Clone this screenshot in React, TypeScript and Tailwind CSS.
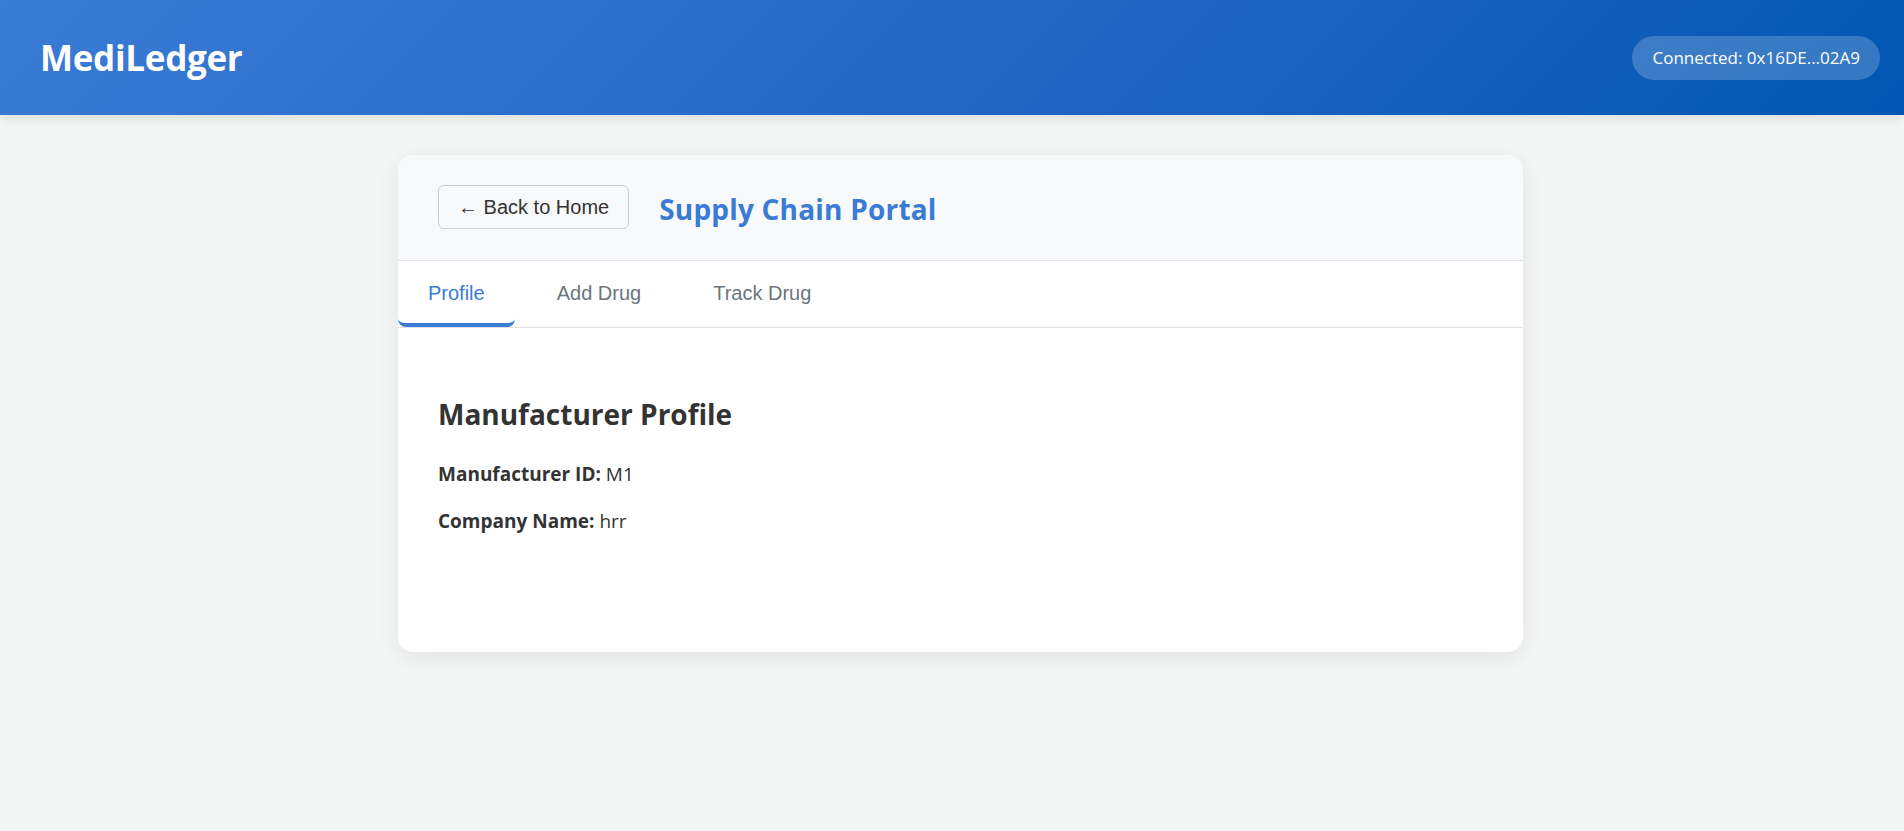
import React from "react";

export default function App() {
  return (
    <div className="min-h-screen bg-[#f4f5f5] font-['Open_Sans',sans-serif] text-[#333]">
      <header className="h-[115px] flex items-center justify-between pl-[40px] pr-[24px] bg-linear-135 from-[#3a7bd5] to-[#0056b3] shadow-[0_2px_12px_rgba(0,0,0,0.12)]">
        <h1 className="text-[35px] font-bold text-white leading-[48px] tracking-[-0.3px]">MediLedger</h1>
        <div className="h-[44px] px-[20px] flex items-center rounded-full bg-white/20 text-white text-[17px]">
          Connected: 0x16DE...02A9
        </div>
      </header>
      <main className="pt-[40px] pb-[40px]">
        <div className="ml-[398px] w-[1125px] bg-white rounded-[15px] overflow-hidden shadow-[0_5px_25px_rgba(0,0,0,0.08)]">
          <div className="bg-[#f8f9fa] border-b border-[#dee2e6] px-[40px] pt-[30px] pb-[31px] flex items-center gap-[30px]">
            <button className="h-[44px] px-[19px] border border-[#cccccc] rounded-[6px] bg-transparent text-[20px] leading-[23px] text-[#333] font-['Liberation_Sans',Arial,sans-serif]">
              ← Back to Home
            </button>
            <h2 className="mt-[3px] text-[28px] font-bold text-[#3a7bd5] leading-[36px] tracking-[0.2px]">Supply Chain Portal</h2>
          </div>
          <div className="flex gap-[12px] border-b border-[#dee2e6] font-['Liberation_Sans',Arial,sans-serif] text-[20px] leading-[23px]">
            <button className="px-[30px] pt-[21px] pb-[18px] border-b-[4px] border-[#3a7bd5] rounded-b-[8px] text-[#3a7bd5]">
              Profile
            </button>
            <button className="px-[30px] pt-[21px] pb-[18px] border-b-[4px] border-transparent text-[#6c757d]">
              Add Drug
            </button>
            <button className="px-[30px] pt-[21px] pb-[18px] border-b-[4px] border-transparent text-[#6c757d]">
              Track Drug
            </button>
          </div>
          <div className="h-[324px] px-[40px] pt-[66px]">
            <h3 className="text-[28px] font-bold leading-[40px] text-[#333]">Manufacturer Profile</h3>
            <p className="mt-[27px] text-[19px] leading-[27px]">
              <span className="font-bold">Manufacturer ID:</span> M1
            </p>
            <p className="mt-[20px] text-[19px] leading-[27px]">
              <span className="font-bold">Company Name:</span> hrr
            </p>
          </div>
        </div>
      </main>
    </div>
  );
}
